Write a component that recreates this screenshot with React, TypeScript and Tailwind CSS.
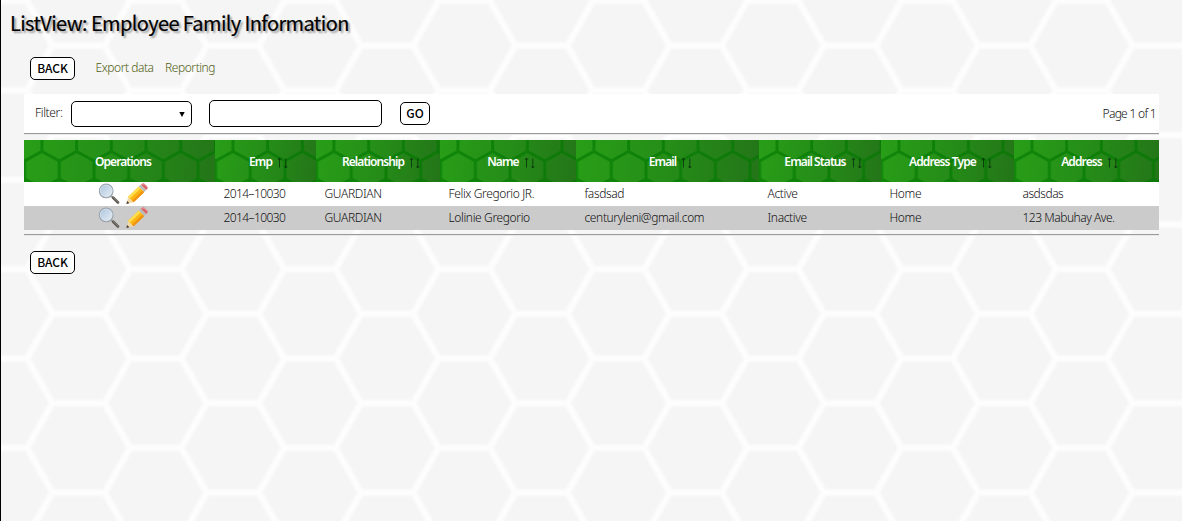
import { useId, type ReactNode } from "react";

const columns = [
  { label: "Operations", width: "w-[191px]", sortable: false },
  { label: "Emp", width: "w-[101px]", sortable: true },
  { label: "Relationship", width: "w-[124px]", sortable: true },
  { label: "Name", width: "w-[136px]", sortable: true },
  { label: "Email", width: "w-[183px]", sortable: true },
  { label: "Email Status", width: "w-[122px]", sortable: true },
  { label: "Address Type", width: "w-[133px]", sortable: true },
  { label: "Address", width: "w-[145px]", sortable: true },
];

const rows = [
  ["2014–10030", "GUARDIAN", "Felix Gregorio JR.", "fasdsad", "Active", "Home", "asdsdas"],
  ["2014–10030", "GUARDIAN", "Lolinie Gregorio", "centuryleni@gmail.com", "Inactive", "Home", "123 Mabuhay Ave."],
];

const hexLines =
  "M-26 44.7 L0 0 H52 L77.5 44.7 L52 89.4 H0 L-26 44.7 M77.5 44.7 H128.8 L154.3 0 H206 M128.8 44.7 L154.3 89.4 H206 M-26 44.7 H-80";

function PageBackground() {
  return (
    <svg className="absolute inset-0 -z-10 h-full w-full" aria-hidden="true">
      <defs>
        <pattern id="page-hex" width="154.3" height="89.4" patternUnits="userSpaceOnUse" patternTransform="translate(51.5 45.6)">
          <g fill="none" stroke="#ffffff" strokeLinejoin="round">
            <path strokeWidth="8.5" strokeOpacity="0.3" d={hexLines} />
            <path strokeWidth="6" strokeOpacity="0.4" d={hexLines} />
            <path strokeWidth="3.5" strokeOpacity="0.6" d={hexLines} />
          </g>
        </pattern>
      </defs>
      <rect width="100%" height="100%" fill="#f5f5f5" />
      <rect width="100%" height="100%" fill="url(#page-hex)" />
    </svg>
  );
}

function HeaderPattern() {
  const id = useId();
  return (
    <svg className="absolute inset-0 h-full w-full" aria-hidden="true">
      <defs>
        <pattern id={id} width="34.7" height="60" patternUnits="userSpaceOnUse" patternTransform="translate(0.6 0)">
          <path
            d="M17.35 -8 V11.5 M0 44 V21 L17.35 11.5 L34.7 21 V44 M0 39 L10 44 M34.7 39 L24.7 44"
            fill="none"
            stroke="#007800"
            strokeOpacity="0.62"
            strokeWidth="3"
          />
        </pattern>
      </defs>
      <rect width="100%" height="100%" fill={`url(#${id})`} />
    </svg>
  );
}

function Button({ children, className }: { children: ReactNode; className: string }) {
  return (
    <button
      className={`flex items-center justify-center rounded-[5px] border border-black bg-white pb-px font-['Noto_Sans_CJK_JP',sans-serif] text-[12px] leading-none font-medium tracking-[-0.1px] text-black ${className}`}
    >
      {children}
    </button>
  );
}

function SortArrows() {
  return (
    <svg className="mt-[2px] ml-[5px] h-[12px] w-[12px]" viewBox="0 0 12 12" fill="none" stroke="#06300a" strokeWidth="0.8" aria-hidden="true">
      <path d="M2.5 10.5V1M1 2.8L2.5 1L4 2.8M8.8 1.5V11M7.3 9.2L8.8 11L10.3 9.2" />
    </svg>
  );
}

function Magnifier() {
  const id = useId();
  return (
    <svg className="h-[22px] w-[22px]" viewBox="0 0 22 22" aria-hidden="true">
      <defs>
        <linearGradient id={id} x1="0" y1="0" x2="1" y2="1">
          <stop offset="0" stopColor="#a9c4dd" />
          <stop offset="0.5" stopColor="#c9d9e9" />
          <stop offset="1" stopColor="#eaf0f5" />
        </linearGradient>
      </defs>
      <path d="M13 13L16 15.5" stroke="#9a9a96" strokeWidth="2" />
      <path d="M15.2 14.8L20 19.4" stroke="#5c5a52" strokeWidth="2.8" strokeLinecap="round" />
      <path d="M15.5 14.5L20 18.8" stroke="#918e84" strokeWidth="0.8" strokeLinecap="round" />
      <circle cx="8.2" cy="7.9" r="6.8" fill={`url(#${id})`} stroke="#97a2ad" strokeWidth="1.2" />
      <circle cx="8.2" cy="7.9" r="5.9" fill="none" stroke="#e2eaf1" strokeWidth="0.6" />
    </svg>
  );
}

function Pencil() {
  return (
    <svg className="h-[22px] w-[22px]" viewBox="0 0 22 22" aria-hidden="true">
      <path d="M0.5 20.8L2.2 13.8L7.6 19.2L0.5 20.8Z" fill="#f3d9a4" />
      <path d="M0.3 21L1.2 18L3.4 20.2L0.3 21Z" fill="#3d3a36" />
      <path d="M2.2 13.8L12.8 3.6L18.3 8.9L7.6 19.2Z" fill="#fbb515" />
      <path d="M2.2 13.8L12.8 3.6L14.6 5.4L4 15.6Z" fill="#ffdf4d" />
      <path d="M6.1 17.7L16.8 7.4L18.3 8.9L7.6 19.2Z" fill="#f0900e" />
      <path d="M12.8 3.6L14.8 1.8L20.2 7L18.3 8.9Z" fill="#c6c8c8" />
      <path d="M13.8 2.7L19.2 7.9" stroke="#939393" strokeWidth="0.6" />
      <path d="M14.8 1.8L15.8 0.9Q17.2 -0.2 18.8 1L21.2 3.4Q22.2 4.8 21.2 6L20.2 7Z" fill="#d9646a" />
      <path d="M16 1.5L18 0.9L21 3.9" stroke="#eea0a2" strokeWidth="0.9" fill="none" />
    </svg>
  );
}

function Rule() {
  return <div className="h-[2px] border-t border-b border-t-[#9a9a9a] border-b-[#e9e9e9]" />;
}

export default function App() {
  return (
    <main className="relative isolate h-[521px] w-full overflow-hidden border-l border-black font-['Noto_Sans',sans-serif] text-[12px] font-light tracking-[-0.37px] text-[#111]">
      <PageBackground />
      <h1 className="h-[57px] pt-[8px] pl-[9px] font-['Noto_Sans_CJK_JP',sans-serif] text-[20px] leading-[30px] font-normal tracking-[-0.62px] text-black [-webkit-text-stroke:0.2px_black] [text-shadow:2px_2px_2px_#999]">
        ListView: Employee Family Information
      </h1>

      <nav className="flex h-[37px] items-start pl-[29px] text-[#4f5c12]">
        <Button className="h-[23px] w-[45px]">BACK</Button>
        <a className="ml-[20.5px] leading-[22px] tracking-[-0.45px]">Export data</a>
        <a className="ml-[11.5px] leading-[22px] tracking-[-0.45px]">Reporting</a>
      </nav>

      <div className="ml-[23px] w-[1135px]">
        <div className="flex h-[39px] items-start bg-white pt-[6px] pr-[3px] pl-[11px]">
          <label className="w-[36px] pt-[2px] leading-[22px]">Filter:</label>
          <div className="mt-px flex h-[26px] w-[121px] items-center justify-end rounded-[5px] border border-black bg-white pr-[6px]">
            <svg className="h-[5px] w-[6px]" viewBox="0 0 6 5" aria-hidden="true">
              <path d="M0.3 0H5.7L3 5Z" fill="#000" />
            </svg>
          </div>
          <input className="ml-[17px] h-[27px] w-[173px] rounded-[5px] border border-black bg-white px-2" />
          <Button className="mt-[2px] ml-[18px] h-[23px] w-[30px]">GO</Button>
          <span className="ml-auto pt-[3px] leading-[22px] tracking-[-0.7px]">Page 1 of 1</span>
        </div>
        <Rule />

        <div className="mt-[5px] flex h-[42px] text-white">
          {columns.map((c) => (
            <div
              key={c.label}
              className={`relative flex shrink-0 items-center justify-center bg-[linear-gradient(100deg,#289e17_0%,#258d18_50%,#247518_100%)] pt-px pl-[7px] ${c.width}`}
            >
              <HeaderPattern />
              <span className="relative flex items-center font-semibold tracking-[-0.9px]">
                {c.label}
                {c.sortable && <SortArrows />}
              </span>
            </div>
          ))}
        </div>
        {rows.map((row, i) => (
          <div key={i} className={`flex h-[24px] ${i % 2 ? "bg-[#cbcbcb]" : "bg-white"}`}>
            <div className="flex w-[191px] shrink-0 gap-[6px] pt-px pl-[74px]">
              <Magnifier />
              <Pencil />
            </div>
            {row.map((cell, j) => (
              <div
                key={j}
                className={`shrink-0 pl-[8.5px] leading-[24px] whitespace-nowrap ${columns[j + 1].width} ${j === 0 ? "tracking-[-0.6px]" : ""} ${j === 6 ? "tracking-[-0.48px]" : ""}`}
              >
                {cell}
              </div>
            ))}
          </div>
        ))}
        <div className="h-[4px]" />
        <Rule />
      </div>

      <div className="pt-[15px] pl-[29px]">
        <Button className="h-[23px] w-[45px]">BACK</Button>
      </div>
    </main>
  );
}
